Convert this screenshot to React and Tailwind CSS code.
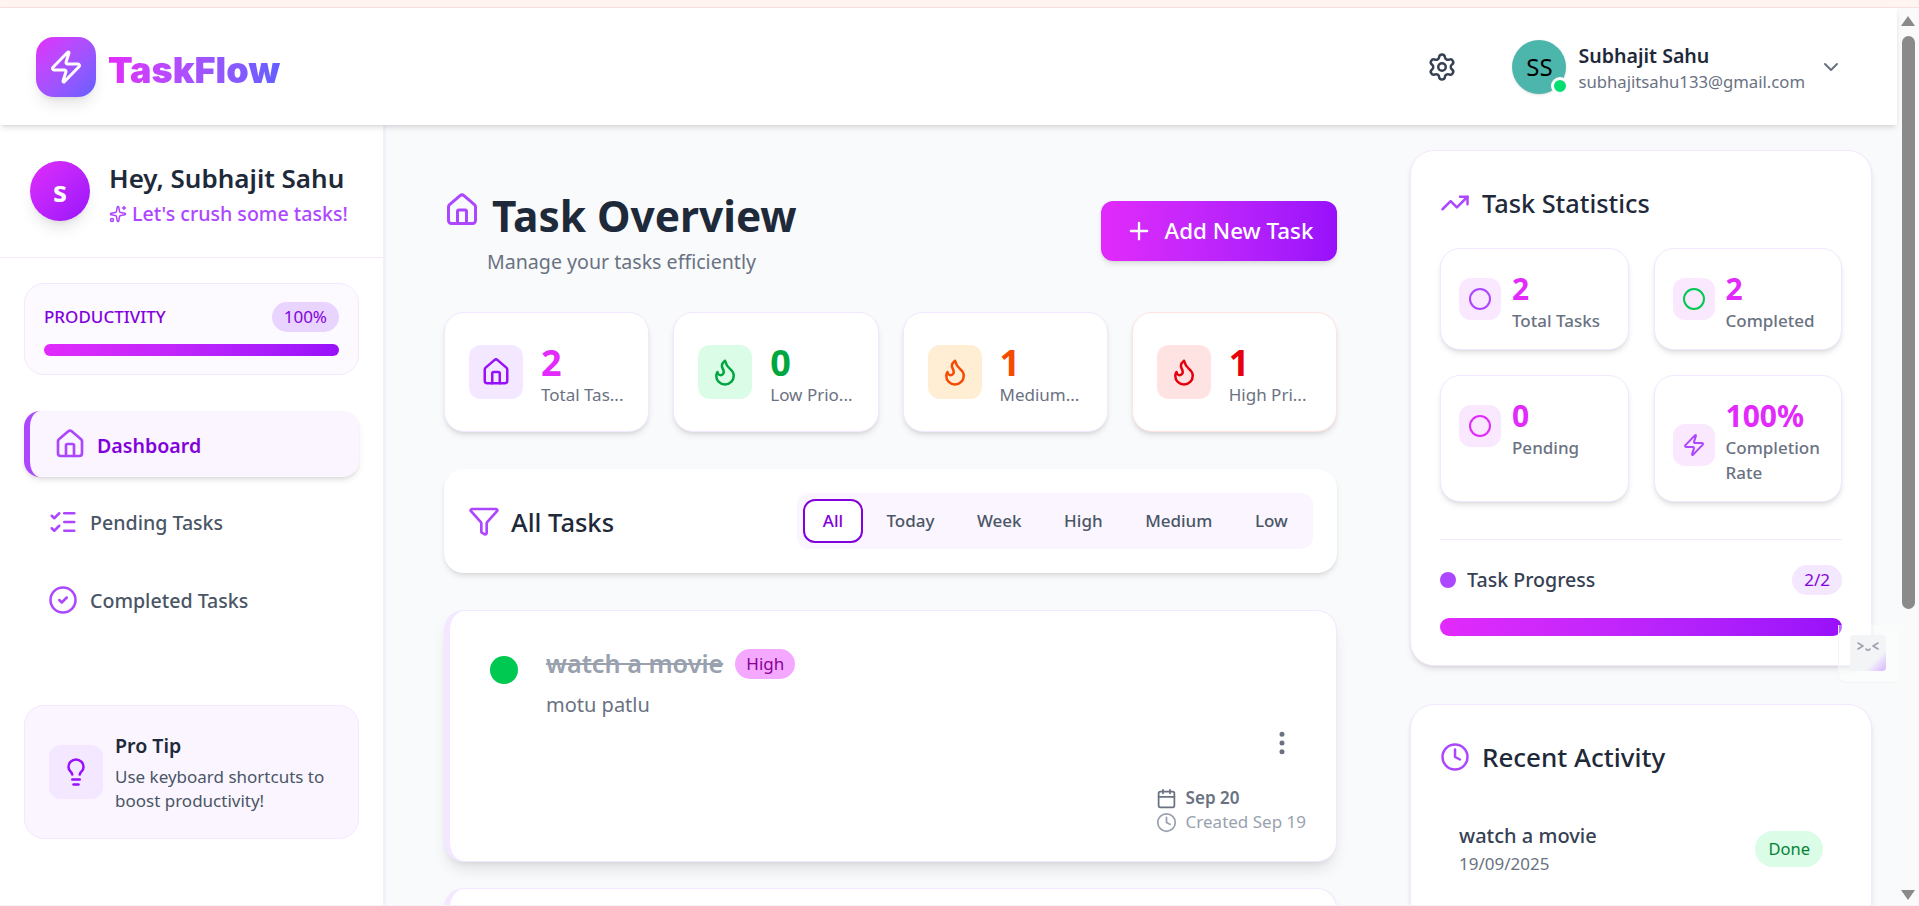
import React from 'react';
import {
  Zap, Settings, ChevronDown, Sparkles, House, ListChecks, CircleCheck, Lightbulb, Plus, Flame,
  Funnel, EllipsisVertical, Calendar, Clock, TrendingUp, Circle,
} from 'lucide-react';

const font = { fontFamily: '"Noto Sans", "Open Sans", sans-serif' };

const SummaryCard = ({ icon: Icon, value, label, box, tone, numTone, border }) => (
  <div className={`flex items-center gap-[18px] h-[120px] px-6 bg-white rounded-[20px] border shadow-md ${border}`}>
    <div className={`w-[54px] h-[54px] shrink-0 rounded-xl flex items-center justify-center ${box}`}>
      <Icon size={30} className={tone} />
    </div>
    <div className="min-w-0 mt-[6px]">
      <div className={`text-[36px] leading-[40px] font-bold ${numTone || tone}`}>{value}</div>
      <div className="text-[17px] leading-6 text-gray-500 whitespace-nowrap">{label}</div>
    </div>
  </div>
);

const StatCard = ({ icon: Icon, iconTone, value, label }) => (
  <div className="flex items-center gap-[11px] p-[17px] pl-[18px] pb-4 bg-white rounded-[20px] border border-purple-100 shadow-md">
    <div className={`w-[42px] h-[42px] shrink-0 mt-[12px] rounded-xl bg-fuchsia-100 flex items-center justify-center ${label.length > 12 ? 'self-center mt-0' : 'self-start'}`}>
      <Icon size={24} className={iconTone} />
    </div>
    <div className="self-start">
      <div className="pt-[3px] text-[30px] leading-10 font-bold text-fuchsia-500">{value}</div>
      <div className="text-[17px] leading-[25px] -mt-px font-medium text-gray-500">{label}</div>
    </div>
  </div>
);

const Sidebar = () => (
  <aside className="w-[386px] shrink-0 bg-white border-r-[3px] border-[#f3f0f9] flex flex-col">
    <div className="h-[133px] px-[30px] flex items-center gap-[19px] border-b border-purple-100">
      <div className="w-[60px] h-[60px] rounded-full bg-gradient-to-br from-fuchsia-500 to-purple-600 shadow-lg flex items-center justify-center text-white text-[28px] font-bold">
        s
      </div>
      <div className="mt-[7px]">
        <div className="text-[26px] leading-8 font-semibold text-gray-800 whitespace-nowrap">Hey, Subhajit Sahu</div>
        <div className="text-[19.600px] leading-7 mt-[6px] font-medium text-purple-500 flex items-center gap-[5px] whitespace-nowrap">
          <Sparkles size={18} /> Let's crush some tasks!
        </div>
      </div>
    </div>

    <div className="mx-6 mt-[25px] h-[92px] px-[19px] pt-[18px] rounded-[20px] bg-[#fdfaff] border border-purple-100">
      <div className="flex items-center justify-between">
        <span className="text-[17px] font-medium text-purple-700">PRODUCTIVITY</span>
        <span className="h-[30px] px-[12px] rounded-full bg-purple-200 text-purple-700 text-[17px] leading-[30px]">100%</span>
      </div>
      <div className="h-3 mt-3 rounded-full bg-gradient-to-r from-fuchsia-500 to-purple-600" />
    </div>

    <nav className="mt-[36px] mx-6 flex flex-col">
      <div className="h-[66px] pl-[24px] flex items-center gap-[11px] rounded-2xl border-l-[6px] border-purple-500 bg-purple-50 shadow-md">
        <House size={32} className="text-purple-500" />
        <span className="mt-[3px] text-[19.600px] font-semibold text-purple-700">Dashboard</span>
      </div>
      <div className="h-[66px] mt-[12px] pl-6 flex items-center gap-[12px] text-[19.600px] font-medium text-gray-600">
        <ListChecks size={30} className="text-purple-500" />
        <span className="mt-[2px]">Pending Tasks</span>
      </div>
      <div className="h-[66px] mt-[12px] pl-6 flex items-center gap-[12px] text-[19.600px] font-medium text-gray-600">
        <CircleCheck size={30} className="text-purple-500" />
        <span className="mt-[2px]">Completed Tasks</span>
      </div>
    </nav>

    <div className="mx-6 mt-[72px] h-[134px] px-6 flex items-center gap-3 rounded-[20px] bg-purple-50 border border-purple-100">
      <div className="w-[54px] h-[54px] shrink-0 rounded-xl bg-purple-100 flex items-center justify-center">
        <Lightbulb size={30} className="text-purple-600" />
      </div>
      <div>
        <div className="text-[19.600px] leading-7 font-semibold text-gray-800">Pro Tip</div>
        <div className="text-[17px] leading-6 mt-[5px] text-gray-600">Use keyboard shortcuts to boost productivity!</div>
      </div>
    </div>
  </aside>
);

const TaskColumn = () => (
  <div className="w-[893px] shrink-0 pt-[65px]">
    <div className="flex items-center justify-between">
      <div>
        <div className="flex items-start gap-[12px]">
          <House size={36} className="text-purple-500 mt-[2px]" />
          <h1 className="text-[42.400px] leading-[52px] font-bold text-gray-800">Task Overview</h1>
        </div>
        <p className="text-[19.600px] leading-7 text-gray-500 ml-[43px] mt-[6px]">Manage your tasks efficiently</p>
      </div>
      <button className="mb-1 h-[60px] w-[236px] rounded-xl bg-gradient-to-r from-fuchsia-500 to-purple-600 text-white text-[22.400px] font-medium flex items-center justify-center gap-[12px] shadow-md">
        <Plus size={28} /> Add New Task
      </button>
    </div>

    <div className="grid grid-cols-4 gap-6 mt-[36px]">
      <SummaryCard icon={House} value="2" label="Total Tas..." box="bg-purple-100" tone="text-purple-600" numTone="text-fuchsia-500" border="border-purple-100" />
      <SummaryCard icon={Flame} value="0" label="Low Prio..." box="bg-green-100" tone="text-green-600" border="border-purple-100" />
      <SummaryCard icon={Flame} value="1" label="Medium..." box="bg-orange-100" tone="text-orange-600" border="border-purple-100" />
      <SummaryCard icon={Flame} value="1" label="High Pri..." box="bg-red-100" tone="text-red-600" border="border-red-100" />
    </div>

    <div className="mt-[37px] h-[104px] px-6 bg-white rounded-[20px] shadow-md flex items-center justify-between">
      <div className="flex items-center gap-[11px]">
        <Funnel size={32} className="text-purple-500" />
        <span className="mt-[2px] text-[25.500px] font-medium text-gray-800">All Tasks</span>
      </div>
      <div className="h-[56px] p-[6px] flex items-center gap-1 rounded-xl bg-purple-50 text-[17px] font-medium text-gray-600">
        <span className="h-[44px] px-[18px] leading-[40px] rounded-xl bg-white border-2 border-purple-700 text-purple-700">All</span>
        <span className="px-[19.250px]">Today</span>
        <span className="px-[19.250px]">Week</span>
        <span className="px-[19.250px]">High</span>
        <span className="px-[19.250px]">Medium</span>
        <span className="px-[19.250px]">Low</span>
      </div>
    </div>

    <div className="mt-[37px] h-[252px] bg-white rounded-[20px] border border-purple-100 border-l-[6px] shadow-lg flex pl-10 pr-[30px] pt-[39px]">
      <div className="w-7 h-7 mt-[6px] rounded-full bg-green-500 shrink-0" />
      <div className="ml-7 flex-1 -mt-[5px]">
        <div className="flex items-center gap-[12px]">
          <span className="text-[25.200px] font-semibold text-gray-400 line-through">watch a movie</span>
          <span className="h-[30px] px-[11px] rounded-full bg-fuchsia-300 text-fuchsia-800 text-[17px] leading-[30px]">High</span>
        </div>
        <p className="text-[20px] leading-7 text-gray-500 mt-[8px]">motu patlu</p>
      </div>
      <div className="flex flex-col items-end pt-[78px]">
        <EllipsisVertical size={30} className="text-gray-500 mr-[9px]" />
        <div className="mt-[28px] text-[17px] leading-6">
          <div className="flex items-center gap-[9px] font-semibold text-gray-500">
            <Calendar size={21} /> Sep 20
          </div>
          <div className="flex items-center gap-[9px] text-gray-400">
            <Clock size={21} /> Created Sep 19
          </div>
        </div>
      </div>
    </div>

    <div className="mt-[26px] h-[252px] bg-white rounded-[20px] border border-purple-100 border-l-[6px] shadow-lg" />
  </div>
);

const StatsColumn = () => (
  <div className="w-[462px] shrink-0 pt-[25px]">
    <div className="h-[516px] px-[29px] pt-[30px] bg-white rounded-3xl border border-purple-100 shadow-md">
      <div className="flex items-center gap-3">
        <TrendingUp size={30} className="text-purple-500" />
        <span className="text-[25.300px] leading-[44px] font-medium text-gray-800">Task Statistics</span>
      </div>
      <div className="grid grid-cols-2 gap-[25px] mt-[23px]">
        <StatCard icon={Circle} iconTone="text-purple-500" value="2" label="Total Tasks" />
        <StatCard icon={Circle} iconTone="text-green-500" value="2" label="Completed" />
        <StatCard icon={Circle} iconTone="text-fuchsia-500" value="0" label="Pending" />
        <StatCard icon={Zap} iconTone="text-purple-500" value="100%" label="Completion Rate" />
      </div>
      <div className="mt-[37px] border-t border-purple-100 pt-[25px]">
        <div className="flex items-center justify-between">
          <div className="flex items-center gap-[11px]">
            <div className="w-4 h-4 rounded-full bg-purple-500" />
            <span className="text-[19.600px] font-medium text-gray-700">Task Progress</span>
          </div>
          <span className="h-[30px] px-3 rounded-full bg-purple-100 text-purple-700 text-[17px] leading-[30px]">2/2</span>
        </div>
        <div className="h-[18px] mt-[23px] rounded-full bg-gradient-to-r from-fuchsia-500 to-purple-600" />
      </div>
    </div>

    <div className="mt-[38px] h-[300px] px-[29px] pt-[30px] bg-white rounded-3xl border border-purple-100 shadow-md">
      <div className="flex items-center gap-3">
        <Clock size={30} className="text-purple-500" />
        <span className="text-[26px] leading-[44px] font-medium text-gray-800">Recent Activity</span>
      </div>
      <div className="mt-[43px] px-[19px] flex items-center justify-between">
        <div>
          <div className="text-[20px] leading-7 font-medium text-gray-700">watch a movie</div>
          <div className="text-[17px] leading-6 mt-[2px] text-gray-500">19/09/2025</div>
        </div>
        <span className="h-9 px-[13px] rounded-full bg-green-100 text-green-700 text-[16.500px] leading-9">Done</span>
      </div>
    </div>
  </div>
);

const FakeScrollbar = () => (
  <div className="w-[22px] shrink-0 bg-[#fafafa] flex flex-col items-center pt-[8px] pb-[5px]">
    <div className="w-0 h-0 border-x-[7px] border-x-transparent border-b-[10px] border-b-[#8a8a8a]" />
    <div className="w-[13px] h-[573px] mt-[10px] rounded-full bg-[#8a8a8a]" />
    <div className="flex-1" />
    <div className="w-0 h-0 border-x-[7px] border-x-transparent border-t-[10px] border-t-[#8a8a8a]" />
  </div>
);

export default function App() {
  return (
    <div style={font} className="relative h-[906px] w-full overflow-hidden flex flex-col bg-white border-b border-gray-100">
      <div className="h-[8px] shrink-0 bg-[#fff4f0] border-b border-[#f6dfdc]" />
      <div className="flex-1 min-h-0 flex">
        <div className="flex-1 min-w-0 flex flex-col">
          <header className="relative z-10 h-[117px] shrink-0 bg-white shadow-md px-9 flex items-center justify-between">
            <div className="flex items-center gap-3">
              <div className="w-[60px] h-[60px] rounded-[18px] bg-gradient-to-br from-fuchsia-500 to-indigo-500 shadow-lg flex items-center justify-center">
                <Zap size={36} className="text-white" />
              </div>
              <span style={{ fontFamily: 'Inter, sans-serif' }} className="mt-[6px] text-[36px] font-black bg-gradient-to-r from-fuchsia-500 to-indigo-500 bg-clip-text text-transparent">TaskFlow</span>
            </div>
            <div className="flex items-center">
              <Settings size={30} className="text-gray-700" />
              <div className="relative ml-[55px] w-[54px] h-[54px] rounded-full bg-[#4db6ac] shadow flex items-center justify-center text-2xl text-black">
                SS
                <span className="absolute right-[-3px] bottom-[-1px] w-[18px] h-[18px] rounded-full bg-green-400 border-[3px] border-white" />
              </div>
              <div className="ml-3 mt-[3px]">
                <div className="text-[19.600px] leading-7 font-semibold text-gray-800">Subhajit Sahu</div>
                <div className="text-[16.700px] leading-6 text-gray-500">subhajitsahu133@gmail.com</div>
              </div>
              <ChevronDown size={24} className="text-gray-500 ml-[14px] mr-[18px]" />
            </div>
          </header>
          <div className="flex-1 min-h-0 flex">
            <Sidebar />
            <main className="flex-1 min-w-0 bg-gray-50 pl-[58px] flex gap-[73px] overflow-hidden">
              <TaskColumn />
              <StatsColumn />
            </main>
          </div>
        </div>
        <FakeScrollbar />
      </div>
      {/* little floating widget over the stats card */}
      <div className="absolute z-20 left-[1838px] top-[625px] w-[59px] h-[58px] rounded-bl-lg bg-white/40 border-b border-l border-gray-100 pl-[11px] pt-[10px]">
        <div className="w-9 h-9 pt-[6px] rounded bg-gradient-to-br from-gray-100 via-gray-100 via-70% to-purple-300 flex items-start justify-center">
          <svg width="22" height="12" viewBox="0 0 22 12" fill="none" stroke="#9ca3af" strokeWidth="1.6" strokeLinecap="round" strokeLinejoin="round">
            <path d="M1 2l5 3-5 3" />
            <path d="M21 2l-5 3 5 3" />
            <path d="M9 8c1 1.600 3 1.600 4 0" />
          </svg>
        </div>
      </div>
    </div>
  );
}
